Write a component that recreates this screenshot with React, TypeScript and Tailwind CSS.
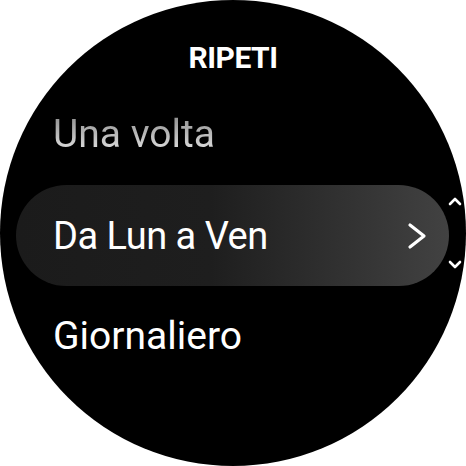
export default function App() {
    const font = { fontFamily: "Roboto, 'Noto Sans', sans-serif" };

    return (
        <div className="w-[466px] h-[466px] bg-white">
            <div
                className="relative w-[466px] h-[466px] rounded-full bg-black overflow-hidden flex flex-col text-white"
                style={font}
            >
                {/* Title */}
                <div className="h-[84px] pt-[43px] text-center">
                    <h1 className="text-[30px] leading-none font-bold tracking-[-0.5px]">RIPETI</h1>
                </div>

                {/* Options */}
                <div className="h-[101px] flex items-center pl-[53px]">
                    <span className="inline-block text-[39px] leading-none bg-gradient-to-b from-[#8e8e8e] to-[#e8e8e8] bg-clip-text text-transparent">
                        Una volta
                    </span>
                </div>

                <div className="ml-[16px] w-[433px] h-[101px] rounded-full bg-gradient-to-r from-[#1b1b1b] via-[#1e1e1e] via-45% to-[#424242] flex items-center justify-between pl-[37px] pr-[22px]">
                    <span className="text-[38px] leading-none tracking-[-0.5px]">Da Lun a Ven</span>
                    <svg width="20" height="28" viewBox="0 0 20 28" fill="none">
                        <path d="M3 3 L17 14 L3 25" stroke="white" strokeWidth="3.2" strokeLinecap="round" strokeLinejoin="round" />
                    </svg>
                </div>

                <div className="h-[101px] flex items-center pl-[53px]">
                    <span className="text-[39px] leading-none">Giornaliero</span>
                </div>

                {/* Scroll indicators */}
                <svg className="absolute left-[448px] top-[195px]" width="14" height="12" viewBox="0 0 14 12" fill="none">
                    <path d="M2 9 L7 4 L12 9" stroke="white" strokeWidth="2.6" strokeLinecap="round" strokeLinejoin="round" />
                </svg>
                <svg className="absolute left-[448px] top-[259px]" width="14" height="12" viewBox="0 0 14 12" fill="none">
                    <path d="M2 3 L7 8 L12 3" stroke="white" strokeWidth="2.6" strokeLinecap="round" strokeLinejoin="round" />
                </svg>
            </div>
        </div>
    );
}
